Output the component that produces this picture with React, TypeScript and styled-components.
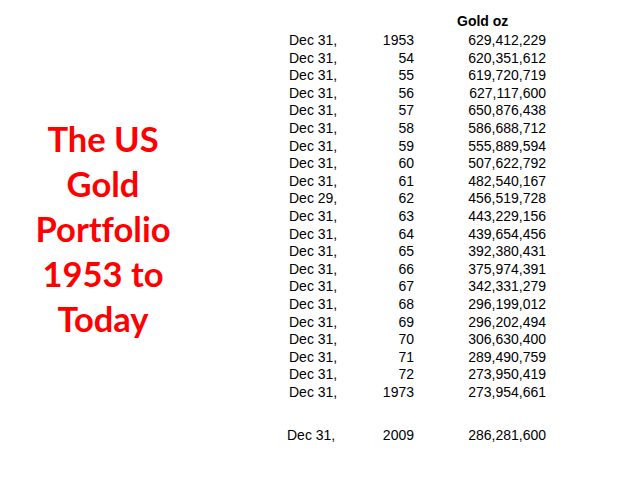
import React from "react";
import styled, { createGlobalStyle } from "styled-components";

const Global = createGlobalStyle`
  html, body { margin: 0; padding: 0; background: #ffffff; }
`;

const Slide = styled.div`
  width: 640px;
  height: 480px;
  display: flex;
  background: #ffffff;
  overflow: hidden;
`;

const TitlePanel = styled.div`
  width: 206px;
  display: flex;
  align-items: center;
  justify-content: center;
  padding-bottom: 24px;
  box-sizing: border-box;
`;

const Title = styled.h1`
  margin: 0;
  font-family: Lato, "Open Sans", sans-serif;
  font-weight: 700;
  font-size: 34.5px;
  line-height: 45px;
  color: #ff0000;
  text-align: center;
  font-variant-ligatures: none;
`;

const TablePanel = styled.div`
  flex: 1;
  padding-top: 12.5px;
  padding-left: 83px;
`;

const Table = styled.div`
  display: grid;
  grid-template-columns: 60px 65px 132px;
  font-family: "Liberation Sans", Arial, sans-serif;
  font-size: 14px;
  line-height: 17.6px;
  color: #000000;
`;

const Cell = styled.div<{ $align?: "left" | "right" }>`
  text-align: ${(p) => p.$align ?? "left"};
  white-space: nowrap;
`;

const Header = styled.div`
  grid-column: 3;
  font-weight: 700;
  padding-left: 43px;
  margin-bottom: 2px;
`;

const Spacer = styled.div`
  grid-column: 1 / span 3;
  height: 25px;
`;

const Shift = styled.span<{ $dx: number }>`
  position: relative;
  left: ${(p) => p.$dx}px;
`;

const rows: [string, string, string][] = [
  ["Dec 31,", "1953", "629,412,229"],
  ["Dec 31,", "54", "620,351,612"],
  ["Dec 31,", "55", "619,720,719"],
  ["Dec 31,", "56", "627,117,600"],
  ["Dec 31,", "57", "650,876,438"],
  ["Dec 31,", "58", "586,688,712"],
  ["Dec 31,", "59", "555,889,594"],
  ["Dec 31,", "60", "507,622,792"],
  ["Dec 31,", "61", "482,540,167"],
  ["Dec 29,", "62", "456,519,728"],
  ["Dec 31,", "63", "443,229,156"],
  ["Dec 31,", "64", "439,654,456"],
  ["Dec 31,", "65", "392,380,431"],
  ["Dec 31,", "66", "375,974,391"],
  ["Dec 31,", "67", "342,331,279"],
  ["Dec 31,", "68", "296,199,012"],
  ["Dec 31,", "69", "296,202,494"],
  ["Dec 31,", "70", "306,630,400"],
  ["Dec 31,", "71", "289,490,759"],
  ["Dec 31,", "72", "273,950,419"],
  ["Dec 31,", "1973", "273,954,661"],
];

export default function App() {
  return (
    <>
      <Global />
      <Slide>
        <TitlePanel>
          <Title>
            The US
            <br />
            Gold
            <br />
            Portfolio
            <br />
            1953 to
            <br />
            Today
          </Title>
        </TitlePanel>
        <TablePanel>
          <Table>
            <Header>Gold oz</Header>
            {rows.map(([d, y, v], i) => (
              <React.Fragment key={i}>
                <Cell>{d}</Cell>
                <Cell $align="right">{y}</Cell>
                <Cell $align="right">{v}</Cell>
              </React.Fragment>
            ))}
            <Spacer />
            <Cell>
              <Shift $dx={-2}>Dec 31,</Shift>
            </Cell>
            <Cell $align="right">2009</Cell>
            <Cell $align="right">286,281,600</Cell>
          </Table>
        </TablePanel>
      </Slide>
    </>
  );
}
